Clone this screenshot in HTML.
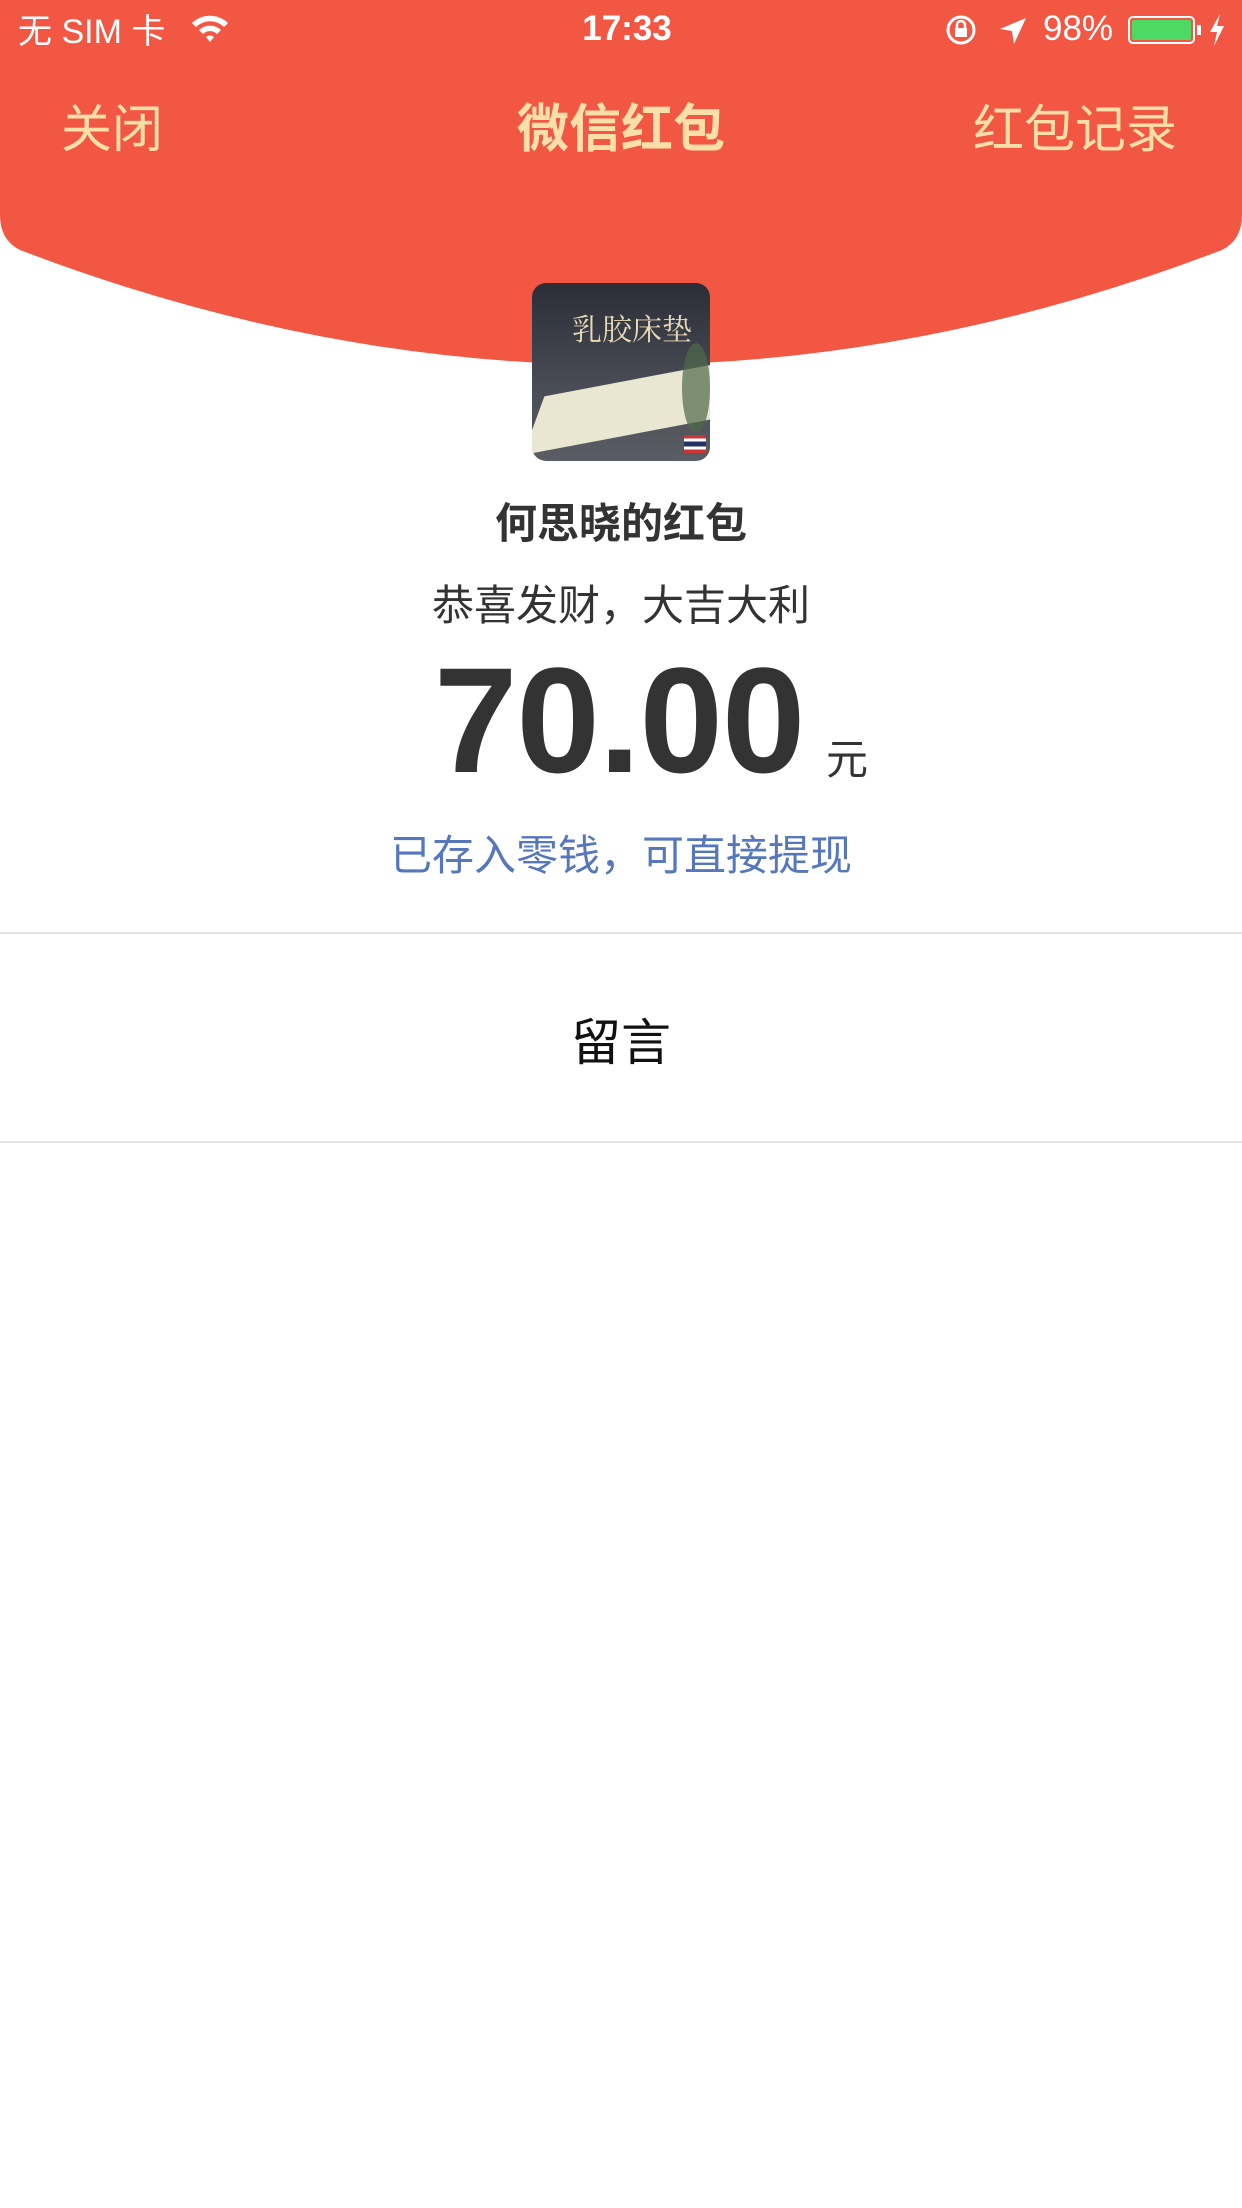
<!DOCTYPE html>
<html><head><meta charset="utf-8"><style>
*{margin:0;padding:0;box-sizing:border-box}
body{width:1242px;height:2208px;background:#fff;position:relative;overflow:hidden;font-family:"Liberation Sans","Noto Sans CJK SC",sans-serif}
.a{position:absolute;white-space:nowrap}
</style></head><body>
<svg class="a" style="left:0;top:0" width="1242" height="380"><path d="M0,0 H1242 V215 Q1242,240 1222,250 Q621,480 20,250 Q0,240 0,215 Z" fill="#f25744"/></svg>
<div class="a" style="left:18px;top:4px;font-size:34px;color:#fff">无 SIM 卡</div>
<svg class="a" style="left:190px;top:12px" width="40" height="32" viewBox="0 0 40 32"><path d="M2,11 A26,26 0 0 1 38,11 L34,15 A20,20 0 0 0 6,15Z M9,18 A16,16 0 0 1 31,18 L27,22 A10,10 0 0 0 13,22Z M16,25 A6,6 0 0 1 24,25 L20,30Z" fill="#fff"/></svg>
<div class="a" style="left:0;width:1254px;text-align:center;top:9px;font-size:35px;font-weight:bold;color:#fff">17:33</div>
<svg class="a" style="left:945px;top:14px" width="34" height="34" viewBox="0 0 34 34"><circle cx="16" cy="16" r="13" fill="none" stroke="#fff" stroke-width="3"/><rect x="10" y="14" width="12" height="9" fill="#fff"/><path d="M12,14 V11 A4,4 0 0 1 20,11 V14" fill="none" stroke="#fff" stroke-width="2.5"/></svg>
<svg class="a" style="left:998px;top:16px" width="30" height="30" viewBox="0 0 30 30"><path d="M28,2 L2,13 L14,15 L16,28Z" fill="#fff"/></svg>
<div class="a" style="left:1043px;top:9px;font-size:35px;color:#fff">98%</div>
<div class="a" style="left:1128px;top:16px;width:67px;height:28px;border:2px solid #fff;border-radius:5px;padding:2px"><div style="width:100%;height:100%;background:#4cd964;border-radius:2px"></div></div>
<div class="a" style="left:1197px;top:25px;width:4px;height:10px;background:#fff"></div>
<svg class="a" style="left:1208px;top:14px" width="18" height="32" viewBox="0 0 18 32"><path d="M12,0 L2,18 H9 L6,32 L16,12 H9Z" fill="#fff"/></svg>
<div class="a" style="left:61px;top:88px;font-size:51px;color:#fbdfa9">关闭</div>
<div class="a" style="left:0;width:1242px;text-align:center;top:87px;font-size:52px;font-weight:bold;color:#fbdfa9">微信红包</div>
<div class="a" style="left:973px;top:88px;font-size:51px;color:#fbdfa9">红包记录</div>
<div class="a" style="left:532px;top:283px;width:178px;height:178px;border-radius:14px;overflow:hidden;background:linear-gradient(180deg,#2b2e36,#4a4d55 60%,#5a5d63)">
<div style="position:absolute;left:40px;top:22px;font-size:30px;color:#e8d9b8;font-family:'Noto Serif CJK SC',serif">乳胶床垫</div>
<div style="position:absolute;left:10px;top:95px;width:170px;height:60px;background:#e9e6d2;transform:skew(-30deg) rotate(-12deg)"></div>
<div style="position:absolute;left:150px;top:60px;width:28px;height:90px;background:#4e6a4a;opacity:.7;border-radius:50%"></div>
<div style="position:absolute;left:152px;top:152px;width:22px;height:18px;background:linear-gradient(#c33 0 20%,#fff 20% 35%,#236 35% 65%,#fff 65% 80%,#c33 80%)"></div>
</div>
<div class="a" style="left:0;width:1242px;text-align:center;top:490px;font-size:42px;font-weight:bold;color:#333">何思晓的红包</div>
<div class="a" style="left:0;width:1242px;text-align:center;top:572px;font-size:42px;color:#333">恭喜发财，大吉大利</div>
<div class="a" style="left:434px;top:634px;font-size:150px;font-weight:bold;color:#333;letter-spacing:-1px">70.00</div>
<div class="a" style="left:826px;top:726px;font-size:42px;color:#333">元</div>
<div class="a" style="left:0;width:1242px;text-align:center;top:822px;font-size:42px;color:#5677bb">已存入零钱，可直接提现</div>
<div class="a" style="left:0;top:932px;width:1242px;height:2px;background:#e5e5e5"></div>
<div class="a" style="left:0;width:1242px;text-align:center;top:1003px;font-size:50px;color:#111">留言</div>
<div class="a" style="left:0;top:1141px;width:1242px;height:2px;background:#e5e5e5"></div>
</body></html>
